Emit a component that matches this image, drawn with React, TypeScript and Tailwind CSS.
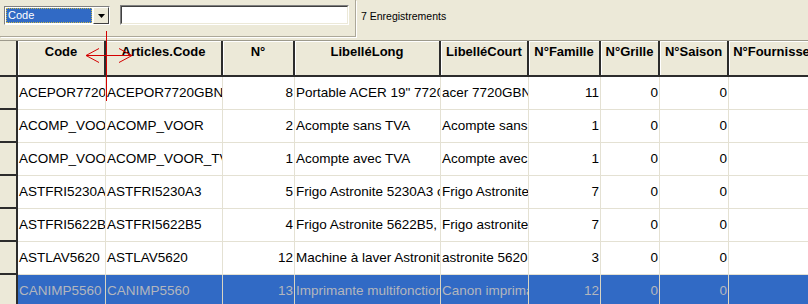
import React from "react";

type Col = { title: string; w: number; right?: boolean };

const cols: Col[] = [
  { title: "Code", w: 88 },
  { title: "Articles.Code", w: 117 },
  { title: "N°", w: 72, right: true },
  { title: "LibelléLong", w: 146 },
  { title: "LibelléCourt", w: 88 },
  { title: "N°Famille", w: 72, right: true },
  { title: "N°Grille", w: 59, right: true },
  { title: "N°Saison", w: 69, right: true },
  { title: "N°Fournisseur", w: 100, right: true },
];

const rows: string[][] = [
  ["ACEPOR7720GBN5", "ACEPOR7720GBN5", "8", "Portable ACER 19\" 7720GBN5", "acer 7720GBN", "11", "0", "0", ""],
  ["ACOMP_VOOR", "ACOMP_VOOR", "2", "Acompte sans TVA", "Acompte sans TVA", "1", "0", "0", ""],
  ["ACOMP_VOOR_TVA", "ACOMP_VOOR_TVA", "1", "Acompte avec TVA", "Acompte avec TVA", "1", "0", "0", ""],
  ["ASTFRI5230A3", "ASTFRI5230A3", "5", "Frigo Astronite 5230A3 classe A", "Frigo Astronite 5230A3", "7", "0", "0", ""],
  ["ASTFRI5622B5", "ASTFRI5622B5", "4", "Frigo Astronite 5622B5, classe A", "Frigo astronite 5622B5", "7", "0", "0", ""],
  ["ASTLAV5620", "ASTLAV5620", "12", "Machine à laver Astronite 5620", "astronite 5620", "3", "0", "0", ""],
  ["CANIMP5560", "CANIMP5560", "13", "Imprimante multifonction Canon", "Canon imprimante", "12", "0", "0", ""],
];

function ResizeCursor() {
  return (
    <svg
      className="absolute left-[84px] top-[31px] pointer-events-none"
      width="50"
      height="72"
      viewBox="0 0 50 72"
    >
      <g stroke="#d40000" strokeWidth="1" fill="none">
        <line x1="22.5" y1="0" x2="22.5" y2="70" />
        <line x1="2" y1="24.5" x2="48" y2="24.5" />
        <polyline points="15,17.5 2,24.5 15,31.5" />
        <polyline points="35,17.5 48,24.5 35,31.5" />
      </g>
    </svg>
  );
}

export default function App() {
  return (
    <div
      className="relative w-[808px] h-[304px] overflow-hidden bg-[#ece9d8] text-black"
      style={{ fontFamily: "'Liberation Sans', Arial, sans-serif" }}
    >
      {/* toolbar */}
      <div className="flex items-start">
        <div className="relative w-[356px] h-[37px] border-r border-b border-[#aca899] shadow-[1px_1px_0_#ffffff]">
          <div className="absolute left-[4px] top-[6px] flex h-[19px] w-[106px] border border-t-[#808080] border-l-[#808080] border-b-white border-r-white bg-white">
            <div className="flex flex-1 items-center p-[1px]">
              <div className="flex h-full w-full items-center bg-[#316ac5] px-[2px] text-[11px] text-white outline outline-1 outline-dotted outline-[#c9b94c] -outline-offset-1">
                Code
              </div>
            </div>
            <div className="flex w-[16px] items-center justify-center border border-t-white border-l-white border-r-[#404040] border-b-[#404040] bg-[#ece9d8]">
              <svg width="7" height="4" viewBox="0 0 7 4">
                <polygon points="0,0 7,0 3.5,4" fill="#000" />
              </svg>
            </div>
          </div>
          <div className="absolute left-[120px] top-[5px] h-[20px] w-[229px] border border-t-[#808080] border-l-[#808080] border-b-white border-r-white">
            <div className="h-full w-full border border-t-[#404040] border-l-[#404040] border-b-[#ece9d8] border-r-[#ece9d8] bg-white" />
          </div>
        </div>
        <div className="pl-[5px] pt-[9px] text-[10.5px] leading-[14px]">7 Enregistrements</div>
      </div>

      {/* grid */}
      <div className="mt-[3px] border-t border-[#9d9a8c]">
        {/* header */}
        <div className="flex h-[36px] border-b-2 border-[#2c2c2c]">
          <div className="w-[18px] shrink-0 border-r-2 border-[#2c2c2c]" />
          {cols.map((c) => (
            <div
              key={c.title}
              className="shrink-0 overflow-hidden whitespace-nowrap border-r-2 border-[#2c2c2c] pt-[3px] text-center text-[13px] font-bold leading-[16px] shadow-[inset_1px_1px_0_#ffffff]"
              style={{ width: c.w }}
            >
              {c.title}
            </div>
          ))}
        </div>

        {/* rows */}
        {rows.map((r, i) => {
          const sel = i === rows.length - 1;
          return (
            <div key={i} className="flex h-[33px]">
              <div className="w-[18px] shrink-0 border-r-2 border-b-2 border-[#2c2c2c] bg-[#ece9d8]" />
              {cols.map((c, j) => (
                <div
                  key={j}
                  className={
                    "flex shrink-0 items-center overflow-hidden whitespace-nowrap border-r border-b text-[13.5px] leading-[16px] " +
                    (c.right ? "justify-end pr-[1px] " : "justify-start pl-[1px] ") +
                    (sel
                      ? "bg-[#316ac5] text-[#b3b6bd] border-[#d9d4c2]"
                      : "bg-white border-[#e4e1d3]")
                  }
                  style={{ width: c.w }}
                >
                  {r[j]}
                </div>
              ))}
            </div>
          );
        })}
      </div>

      <ResizeCursor />
    </div>
  );
}
